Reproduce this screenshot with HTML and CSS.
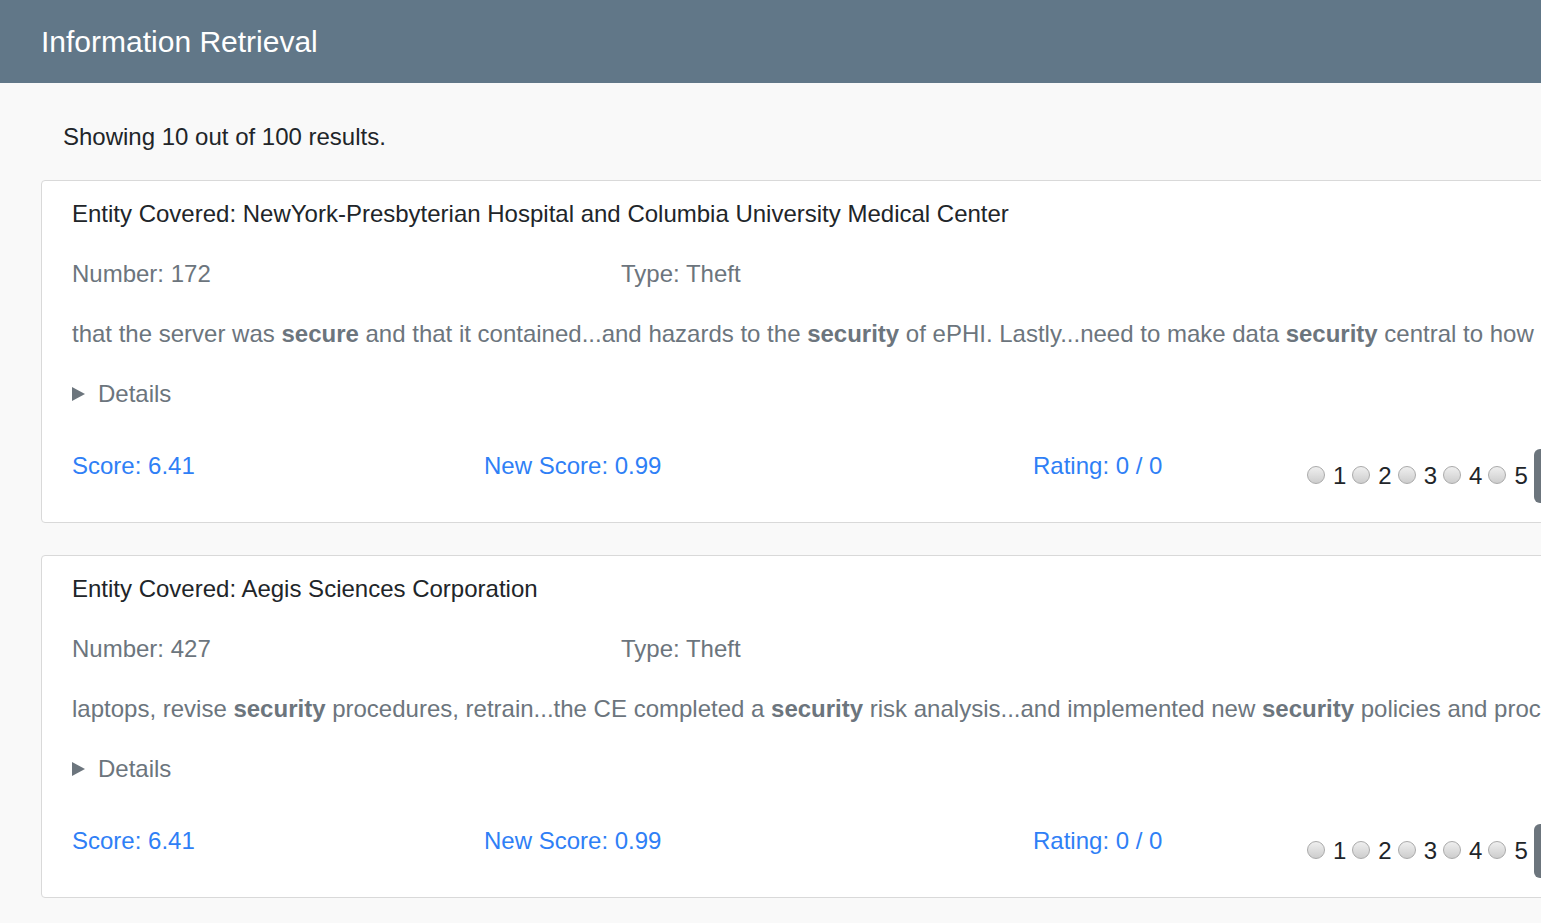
FILE: index.html
```html
<!DOCTYPE html>
<html lang="en">
<head>
<meta charset="utf-8">
<title>Information Retrieval</title>
<link rel="stylesheet" href="styles.css">
</head>
<body>
<header class="topbar">
  <h1 class="brand">Information Retrieval</h1>
</header>
<main class="main">
  <p class="summary-line">Showing 10 out of 100 results.</p>

  <article class="card">
    <div class="entity">Entity Covered: NewYork-Presbyterian Hospital and Columbia University Medical Center</div>
    <div class="meta-row">
      <div class="cell cell-4">Number: 172</div>
      <div class="cell cell-8">Type: Theft</div>
    </div>
    <p class="snippet">that the server was <b>secure</b> and that it contained...and hazards to the <b>security</b> of ePHI. Lastly...need to make data <b>security</b> central to how</p>
    <details class="details">
      <summary><svg class="tri" width="13" height="14" viewBox="0 0 13 14"><path d="M0 0 L13 7 L0 14 Z" fill="#6c757d"/></svg><span>Details</span></summary>
    </details>
    <div class="score-row">
      <div class="cell score">Score: 6.41</div>
      <div class="cell score">New Score: 0.99</div>
      <div class="cell score">Rating: 0 / 0</div>
      <div class="cell rate">
        <label class="opt"><input type="radio" name="r1"> 1</label>
        <label class="opt"><input type="radio" name="r1"> 2</label>
        <label class="opt"><input type="radio" name="r1"> 3</label>
        <label class="opt"><input type="radio" name="r1"> 4</label>
        <label class="opt"><input type="radio" name="r1"> 5</label>
        <button class="btn" type="button">Submit</button>
      </div>
    </div>
  </article>

  <article class="card">
    <div class="entity">Entity Covered: Aegis Sciences Corporation</div>
    <div class="meta-row">
      <div class="cell cell-4">Number: 427</div>
      <div class="cell cell-8">Type: Theft</div>
    </div>
    <p class="snippet">laptops, revise <b>security</b> procedures, retrain...the CE completed a <b>security</b> risk analysis...and implemented new <b>security</b> policies and procedures.</p>
    <details class="details">
      <summary><svg class="tri" width="13" height="14" viewBox="0 0 13 14"><path d="M0 0 L13 7 L0 14 Z" fill="#6c757d"/></svg><span>Details</span></summary>
    </details>
    <div class="score-row">
      <div class="cell score">Score: 6.41</div>
      <div class="cell score">New Score: 0.99</div>
      <div class="cell score">Rating: 0 / 0</div>
      <div class="cell rate">
        <label class="opt"><input type="radio" name="r2"> 1</label>
        <label class="opt"><input type="radio" name="r2"> 2</label>
        <label class="opt"><input type="radio" name="r2"> 3</label>
        <label class="opt"><input type="radio" name="r2"> 4</label>
        <label class="opt"><input type="radio" name="r2"> 5</label>
        <button class="btn" type="button">Submit</button>
      </div>
    </div>
  </article>
</main>
</body>
</html>
```

FILE: styles.css
```css
html, body {
  overflow: hidden;
}
body {
  margin: 0;
  background: #f9f9f9;
  font-family: "Liberation Sans", Arial, sans-serif;
  font-size: 24px;
  line-height: 36px;
  color: #212529;
}
.topbar {
  height: 83px;
  background: #617788;
  display: flex;
  align-items: center;
  padding-left: 41px;
}
.brand {
  margin: 0;
  font-size: 30px;
  font-weight: normal;
  color: #ffffff;
  line-height: 36px;
}
.main {
  padding: 36px 0 0 41px;
}
.summary-line {
  margin: 0 0 25px 22px;
  color: #212529;
}
.card {
  box-sizing: border-box;
  width: 1710px;
  background: #ffffff;
  border: 1px solid #d9d9d9;
  border-radius: 4px;
  padding: 15px 30px 19px 30px;
  margin-bottom: 32px;
}
.entity {
  color: #212529;
}
.meta-row {
  display: grid;
  grid-template-columns: 549px 1fr;
  margin-top: 24px;
  color: #6c757d;
}
.snippet {
  margin: 24px 0 0 0;
  color: #6c757d;
  white-space: nowrap;
}
.snippet b {
  font-weight: bold;
}
.details {
  margin-top: 24px;
  color: #6c757d;
}
.details summary {
  list-style: none;
  display: flex;
  align-items: center;
  cursor: pointer;
}
.details summary::-webkit-details-marker {
  display: none;
}
.tri {
  display: block;
  margin-right: 13px;
}
.score-row {
  display: grid;
  grid-template-columns: 412px 549px 274px 412px;
  margin-top: 36px;
  align-items: start;
}
.score {
  color: #2f7ff6;
}
.rate {
  display: flex;
  align-items: center;
  margin-top: 1px;
  white-space: nowrap;
  color: #212529;
}
.opt {
  display: inline-flex;
  align-items: center;
  margin-right: 6px;
}
.opt input {
  -webkit-appearance: none;
  appearance: none;
  width: 18px;
  height: 18px;
  margin: 0 8px 0 0;
  border-radius: 50%;
  border: 1px solid #aaaaaa;
  background: linear-gradient(#efefef, #cdcdcd);
  box-sizing: border-box;
  position: relative;
  top: -1px;
}
.btn {
  height: 54px;
  padding: 0 18px;
  border: none;
  border-radius: 6px;
  background: #6c757d;
  color: #ffffff;
  font-family: "Liberation Sans", Arial, sans-serif;
  font-size: 24px;
}
```
